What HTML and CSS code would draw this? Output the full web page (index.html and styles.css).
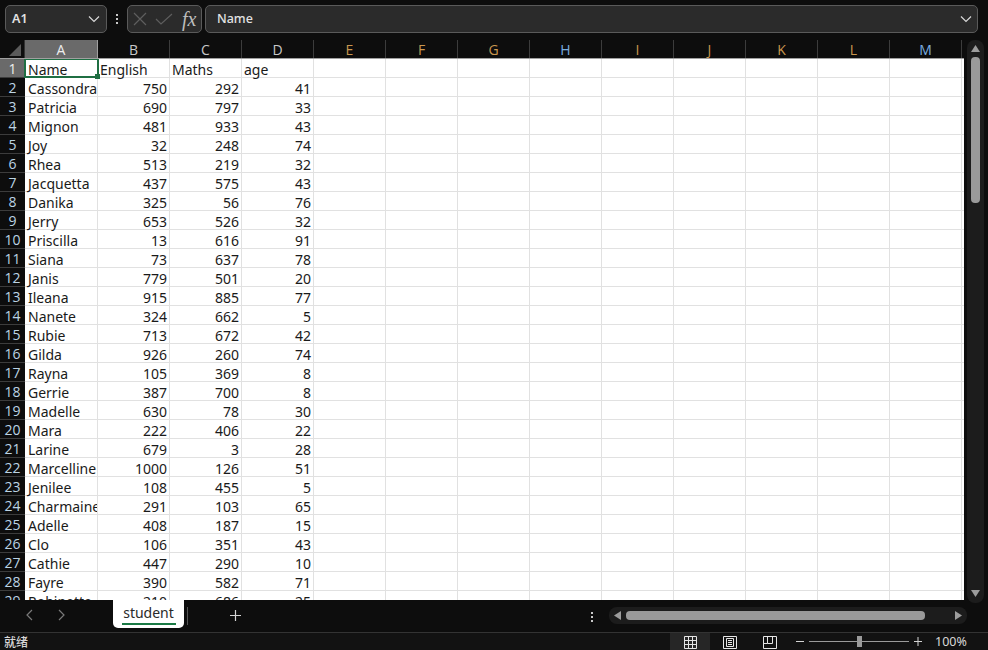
FILE: index.html
```html
<!DOCTYPE html>
<html lang="zh">
<head>
<meta charset="utf-8">
<title>student</title>
<link rel="stylesheet" href="styles.css">
</head>
<body>
<div class="app">
  <div class="formula-bar">
    <div class="name-box"><span>A1</span>
      <svg class="chev" width="12" height="8" viewBox="0 0 12 8"><path d="M1 1.5 6 6.5 11 1.5" fill="none" stroke="#d8d8d8" stroke-width="1.2"/></svg>
    </div>
    <div class="dots"><i></i><i></i><i></i></div>
    <div class="fx-box">
      <svg width="16" height="16" viewBox="0 0 16 16"><path d="M2 2 14 14M14 2 2 14" stroke="#5e5e5e" stroke-width="1.2" fill="none"/></svg>
      <svg width="18" height="14" viewBox="0 0 18 14"><path d="M1 7 6 12 17 2" stroke="#5e5e5e" stroke-width="1.2" fill="none"/></svg>
      <span class="fx">fx</span>
    </div>
    <div class="formula-input"><span>Name</span>
      <svg class="chev" width="12" height="8" viewBox="0 0 12 8"><path d="M1 1.5 6 6.5 11 1.5" fill="none" stroke="#d8d8d8" stroke-width="1.2"/></svg>
    </div>
  </div>
  <div class="sheet-area">
    <div class="grid-wrap">
      <div class="col-heads">
        <div class="corner"><svg width="12" height="12" viewBox="0 0 12 12"><path d="M12 0V12H0Z" fill="#5a5a5a"/></svg></div>
        <div class="ch ch-a sel">A</div><div class="ch w72">B</div><div class="ch w72">C</div><div class="ch w72">D</div>
        <div class="ch w72 tint-o">E</div><div class="ch w72 tint-o">F</div><div class="ch w72 tint-o">G</div><div class="ch w72 tint-b">H</div><div class="ch w72 tint-o">I</div><div class="ch w72 tint-o">J</div><div class="ch w72 tint-o">K</div><div class="ch w72 tint-o">L</div><div class="ch w72 tint-b">M</div>
      </div>
      <div class="rows">
        <div class="row first"><div class="rh sel">1</div><div class="c c-a active">Name</div><div class="c">English</div><div class="c">Maths</div><div class="c">age</div></div>
        <div class="row"><div class="rh">2</div><div class="c c-a">Cassondra</div><div class="c n">750</div><div class="c n">292</div><div class="c n">41</div></div>
        <div class="row"><div class="rh">3</div><div class="c c-a">Patricia</div><div class="c n">690</div><div class="c n">797</div><div class="c n">33</div></div>
        <div class="row"><div class="rh">4</div><div class="c c-a">Mignon</div><div class="c n">481</div><div class="c n">933</div><div class="c n">43</div></div>
        <div class="row"><div class="rh">5</div><div class="c c-a">Joy</div><div class="c n">32</div><div class="c n">248</div><div class="c n">74</div></div>
        <div class="row"><div class="rh">6</div><div class="c c-a">Rhea</div><div class="c n">513</div><div class="c n">219</div><div class="c n">32</div></div>
        <div class="row"><div class="rh">7</div><div class="c c-a">Jacquetta</div><div class="c n">437</div><div class="c n">575</div><div class="c n">43</div></div>
        <div class="row"><div class="rh">8</div><div class="c c-a">Danika</div><div class="c n">325</div><div class="c n">56</div><div class="c n">76</div></div>
        <div class="row"><div class="rh">9</div><div class="c c-a">Jerry</div><div class="c n">653</div><div class="c n">526</div><div class="c n">32</div></div>
        <div class="row"><div class="rh">10</div><div class="c c-a">Priscilla</div><div class="c n">13</div><div class="c n">616</div><div class="c n">91</div></div>
        <div class="row"><div class="rh">11</div><div class="c c-a">Siana</div><div class="c n">73</div><div class="c n">637</div><div class="c n">78</div></div>
        <div class="row"><div class="rh">12</div><div class="c c-a">Janis</div><div class="c n">779</div><div class="c n">501</div><div class="c n">20</div></div>
        <div class="row"><div class="rh">13</div><div class="c c-a">Ileana</div><div class="c n">915</div><div class="c n">885</div><div class="c n">77</div></div>
        <div class="row"><div class="rh">14</div><div class="c c-a">Nanete</div><div class="c n">324</div><div class="c n">662</div><div class="c n">5</div></div>
        <div class="row"><div class="rh">15</div><div class="c c-a">Rubie</div><div class="c n">713</div><div class="c n">672</div><div class="c n">42</div></div>
        <div class="row"><div class="rh">16</div><div class="c c-a">Gilda</div><div class="c n">926</div><div class="c n">260</div><div class="c n">74</div></div>
        <div class="row"><div class="rh">17</div><div class="c c-a">Rayna</div><div class="c n">105</div><div class="c n">369</div><div class="c n">8</div></div>
        <div class="row"><div class="rh">18</div><div class="c c-a">Gerrie</div><div class="c n">387</div><div class="c n">700</div><div class="c n">8</div></div>
        <div class="row"><div class="rh">19</div><div class="c c-a">Madelle</div><div class="c n">630</div><div class="c n">78</div><div class="c n">30</div></div>
        <div class="row"><div class="rh">20</div><div class="c c-a">Mara</div><div class="c n">222</div><div class="c n">406</div><div class="c n">22</div></div>
        <div class="row"><div class="rh">21</div><div class="c c-a">Larine</div><div class="c n">679</div><div class="c n">3</div><div class="c n">28</div></div>
        <div class="row"><div class="rh">22</div><div class="c c-a">Marcelline</div><div class="c n">1000</div><div class="c n">126</div><div class="c n">51</div></div>
        <div class="row"><div class="rh">23</div><div class="c c-a">Jenilee</div><div class="c n">108</div><div class="c n">455</div><div class="c n">5</div></div>
        <div class="row"><div class="rh">24</div><div class="c c-a">Charmaine</div><div class="c n">291</div><div class="c n">103</div><div class="c n">65</div></div>
        <div class="row"><div class="rh">25</div><div class="c c-a">Adelle</div><div class="c n">408</div><div class="c n">187</div><div class="c n">15</div></div>
        <div class="row"><div class="rh">26</div><div class="c c-a">Clo</div><div class="c n">106</div><div class="c n">351</div><div class="c n">43</div></div>
        <div class="row"><div class="rh">27</div><div class="c c-a">Cathie</div><div class="c n">447</div><div class="c n">290</div><div class="c n">10</div></div>
        <div class="row"><div class="rh">28</div><div class="c c-a">Fayre</div><div class="c n">390</div><div class="c n">582</div><div class="c n">71</div></div>
        <div class="row"><div class="rh">29</div><div class="c c-a">Robinette</div><div class="c n">210</div><div class="c n">686</div><div class="c n">25</div></div>
      </div>
    </div>
    <div class="vscroll">
      <svg width="9" height="7" viewBox="0 0 9 7"><path d="M4.5 0 9 7H0Z" fill="#9c9c9c"/></svg>
      <div class="vthumb-track"><div class="vthumb"></div></div>
      <svg width="9" height="7" viewBox="0 0 9 7"><path d="M4.5 7 9 0H0Z" fill="#9c9c9c"/></svg>
    </div>
  </div>
  <div class="tabs-bar">
    <div class="nav">
      <svg width="8" height="12" viewBox="0 0 8 12"><path d="M7 1 2 6 7 11" fill="none" stroke="#7a7a7a" stroke-width="1.2"/></svg>
      <svg width="8" height="12" viewBox="0 0 8 12"><path d="M1 1 6 6 1 11" fill="none" stroke="#7a7a7a" stroke-width="1.2"/></svg>
    </div>
    <div class="tab"><span class="tab-label">student</span></div>
    <div class="tab-sep"></div>
    <svg class="plus" width="11" height="11" viewBox="0 0 11 11"><path d="M5.5 0V11M0 5.5H11" stroke="#d4d4d4" stroke-width="1.2"/></svg>
    <div class="dots bar-dots"><i></i><i></i><i></i></div>
    <div class="hscroll">
      <svg width="7" height="9" viewBox="0 0 7 9"><path d="M0 4.5 7 0V9Z" fill="#9c9c9c"/></svg>
      <div class="hthumb-track"><div class="hthumb"></div></div>
      <svg width="7" height="9" viewBox="0 0 7 9"><path d="M7 4.5 0 0V9Z" fill="#9c9c9c"/></svg>
    </div>
  </div>
  <div class="status-bar">
    <span class="ready">就绪</span>
    <div class="view-btn on"><svg width="13" height="13" viewBox="0 0 13 13"><path d="M.5.5h12v12H.5zM4.5.5v12M8.5.5v12M.5 4.5h12M.5 8.5h12" fill="none" stroke="#e6e6e6"/></svg></div>
    <div class="view-btn"><svg width="14" height="13" viewBox="0 0 14 13"><path d="M.5.5h13v12H.5zM3.5 2.500h7v8h-7zM5 4.500h4M5 6.500h4M5 8.500h4" fill="none" stroke="#e6e6e6"/></svg></div>
    <div class="view-btn"><svg width="14" height="13" viewBox="0 0 14 13"><path d="M.5.5h13v12H.5zM4.500.5v7h5v-7M.5 7.500h4" fill="none" stroke="#e6e6e6"/></svg></div>
    <div class="zoom">
      <svg width="8" height="9" viewBox="0 0 8 9"><path d="M0 4.500H8" stroke="#d4d4d4" stroke-width="1"/></svg>
      <div class="slider"><div class="knob"></div></div>
      <svg width="8" height="9" viewBox="0 0 8 9"><path d="M0 4.500H8M4 0V9" stroke="#d4d4d4" stroke-width="1"/></svg>
    </div>
    <span class="pct">100%</span>
  </div>
</div>
</body>
</html>
```
FILE: styles.css
```css
* { box-sizing: border-box; }
html, body { margin: 0; padding: 0; }
body {
  width: 988px;
  height: 650px;
  overflow: hidden;
  background: #0d0d0d;
  font-family: "Noto Sans", "Noto Sans CJK SC", sans-serif;
}
.app { display: flex; flex-direction: column; width: 988px; height: 650px; }

/* formula bar */
.formula-bar { height: 40px; display: flex; align-items: flex-start; padding: 5px 10px 0 5px; }
.name-box, .fx-box, .formula-input {
  height: 28px;
  background: #2b2b2b;
  border: 1px solid #5a5a5a;
  border-radius: 5px;
  display: flex;
  align-items: center;
  color: #e2e2e2;
  font-size: 12.5px;
}
.name-box span, .formula-input span { margin-bottom: 2px; }
.name-box { width: 102px; padding: 0 6px 0 6px; justify-content: space-between; font-weight: 600; }
.dots { display: flex; flex-direction: column; gap: 2px; }
.dots i { display: block; width: 2px; height: 2px; background: #c8c8c8; }
.formula-bar .dots { width: 20px; height: 28px; align-items: center; justify-content: center; }
.fx-box { width: 75px; padding: 0 4px; gap: 7px; }
.fx { font-family: "Liberation Serif", serif; font-style: italic; font-size: 20px; color: #bdbdbd; margin-left: 2px; }
.formula-input { margin-left: 3px; flex: 1; padding: 0 5px 0 11px; justify-content: space-between; }
.formula-input span { font-weight: 500; }

/* sheet */
.sheet-area { height: 560px; display: flex; align-items: flex-start; }
.grid-wrap { width: 964px; height: 560px; display: flex; flex-direction: column; overflow: hidden; }
.col-heads { height: 19px; display: flex; flex-shrink: 0; background: #0d0d0d; border-bottom: 1px solid #a0a0a0; }
.corner { width: 25px; display: flex; align-items: flex-end; justify-content: flex-end; padding: 0 3px 2px 0; border-right: 1px solid #333; }
.ch { color: #c8c8c8; font-size: 14px; line-height: 19px; text-align: center; border-right: 1px solid #3c3c3c; font-family: "Open Sans", sans-serif; }
.ch-a { width: 73px; }
.w72 { width: 72px; }
.ch.sel { background: #6a6a6a; color: #eee; border-right-color: #a0a0a0; }
.tint-o { color: #c9974f; }
.tint-b { color: #7aaee0; }

.rows { flex: 1; overflow: hidden; background: #fff; }
.row {
  height: 19px;
  display: flex;
  background-color: #fff;
  background-image:
    linear-gradient(#e1e1e1, #e1e1e1),
    repeating-linear-gradient(90deg, #fff 0, #fff 71px, #e1e1e1 71px, #e1e1e1 72px);
  background-size: 100% 1px, calc(100% - 314px) 100%;
  background-position: 0 100%, 314px 0;
  background-repeat: no-repeat;
}
.rh {
  width: 25px;
  flex-shrink: 0;
  background: #0d0d0d;
  color: #bcd4e4;
  font-size: 14px;
  line-height: 19px;
  text-align: center;
  border-bottom: 1px solid #3c3c3c;
  font-family: "Open Sans", sans-serif;
}
.rh.sel { background: #6a6a6a; color: #eee; }
.c {
  width: 72px;
  flex-shrink: 0;
  font-size: 14px;
  line-height: 19px;
  color: #1a1a1a;
  padding: 1px 2px 0;
  border-right: 1px solid #e1e1e1;
  border-bottom: 1px solid #e1e1e1;
  white-space: nowrap;
  overflow-x: clip;
  overflow-y: visible;
  position: relative;
}
.c-a { width: 73px; padding-left: 3px; }
.n { text-align: right; }
.active { overflow: visible; }
.active::after {
  content: "";
  position: absolute;
  left: -1px; top: -1px; right: -2px; bottom: -1px;
  border: 2px solid #1f6f43;
  z-index: 2;
}
.active::before {
  content: "";
  position: absolute;
  left: 70px; top: 15px;
  width: 5px; height: 5px;
  background: #1f6f43;
  z-index: 3;
}

/* scrollbar */
.vscroll {
  width: 17px;
  height: 563px;
  margin-left: 3px;
  background: #1c1c1c;
  border-radius: 8px;
  display: flex;
  flex-direction: column;
  align-items: center;
  padding: 5px 0 6px;
  position: relative;
  z-index: 1;
}
.vthumb-track { flex: 1; padding: 5px 0 0; width: 100%; display: flex; justify-content: center; }
.vthumb { width: 9px; height: 146px; background: #9a9a9a; border-radius: 4px; }

/* tabs */
.tabs-bar { height: 33px; flex-shrink: 0; display: flex; align-items: flex-start; border-bottom: 1px solid #333; }
.nav { width: 113px; height: 30px; display: flex; align-items: center; padding-left: 25px; gap: 25px; }
.tab {
  width: 71px;
  height: 28px;
  background: #fff;
  border-radius: 0 0 5px 5px;
  display: flex;
  justify-content: center;
}
.tab-label { height: 25px; padding: 3px 0 0; border-bottom: 2px solid #1a7a45; font-size: 14px; line-height: 20px; color: #2a2a2a; width: 54px; text-align: center; }
.tab-sep { width: 1px; height: 18px; background: #555; margin: 7px 0 0 3px; }
.plus { margin: 10px 0 0 42px; }
.bar-dots { margin: 12px 0 0 350px; }
.hscroll {
  margin: 7px 21px 0 16px;
  flex: 1;
  height: 17px;
  background: #1c1c1c;
  border-radius: 8px;
  display: flex;
  align-items: center;
  padding: 0 5px;
}
.hthumb-track { flex: 1; padding-left: 5px; }
.hthumb { width: 299px; height: 9px; background: #9a9a9a; border-radius: 4px; }

/* status */
.status-bar { height: 17px; display: flex; align-items: center; color: #d8d8d8; font-size: 12px; background: #121212; }
.ready { margin-left: 4px; width: 666px; font-weight: 500; }
.view-btn { width: 40px; height: 17px; display: flex; align-items: center; justify-content: center; padding-top: 1px; }
.view-btn.on { background: #262626; }
.zoom { display: flex; align-items: center; gap: 5px; margin-left: 6px; }
.slider { width: 100px; height: 1px; background: #9a9a9a; position: relative; }
.knob { position: absolute; left: 48px; top: -5px; width: 5px; height: 11px; background: #9a9a9a; }
.pct { margin-left: 13px; font-size: 12.5px; }
```
